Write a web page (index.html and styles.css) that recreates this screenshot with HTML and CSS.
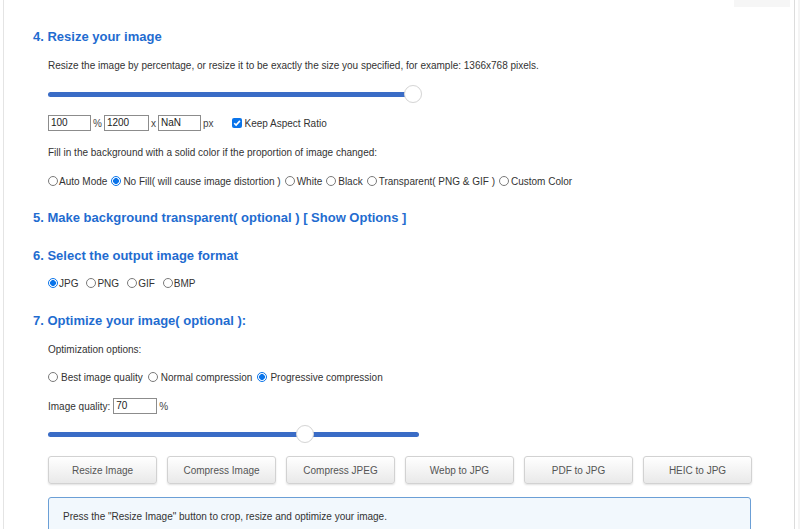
FILE: index.html
```html
<!DOCTYPE html>
<html>
<head>
<meta charset="utf-8">
<link rel="stylesheet" href="styles.css">
</head>
<body>
<div class="page">
  <div class="topbar"><span class="topbtn"></span></div>

  <h2 class="step s4">4. Resize your image</h2>
  <div class="inner">
    <p class="txt t1">Resize the image by percentage, or resize it to be exactly the size you specified, for example: 1366x768 pixels.</p>
    <div class="slider sl1"><div class="track"></div><span class="thumb" style="left:356px"></span></div>
    <div class="sizes">
      <span class="field w42">100</span><span class="unit">%</span>
      <span class="field w44">1200</span><span class="unit">x</span>
      <span class="field w42">NaN</span><span class="unit">px</span>
      <span class="check"><svg viewBox="0 0 10 10" width="10" height="10"><rect width="10" height="10" rx="2" fill="#0a74ea"/><path d="M2.2 5.2 L4.1 7.1 L7.9 2.9" fill="none" stroke="#fff" stroke-width="1.6"/></svg></span><span class="cklabel">Keep Aspect Ratio</span>
    </div>
    <p class="txt t2">Fill in the background with a solid color if the proportion of image changed:</p>
    <div class="radios r1">
      <label class="opt tight"><span class="radio"></span>Auto Mode</label>
      <label class="opt"><span class="radio on"></span>No Fill( will cause image distortion )</label>
      <label class="opt"><span class="radio"></span>White</label>
      <label class="opt"><span class="radio"></span>Black</label>
      <label class="opt"><span class="radio"></span>Transparent( PNG &amp; GIF )</label>
      <label class="opt"><span class="radio"></span>Custom Color</label>
    </div>
  </div>

  <h2 class="step s5">5. Make background transparent( optional ) [ Show Options ]</h2>

  <h2 class="step s6">6. Select the output image format</h2>
  <div class="inner">
    <div class="radios r2">
      <label class="opt tight"><span class="radio on"></span>JPG</label>
      <label class="opt tight"><span class="radio"></span>PNG</label>
      <label class="opt tight"><span class="radio"></span>GIF</label>
      <label class="opt tight"><span class="radio"></span>BMP</label>
    </div>
  </div>

  <h2 class="step s7">7. Optimize your image( optional ):</h2>
  <div class="inner">
    <p class="txt t3">Optimization options:</p>
    <div class="radios r3">
      <label class="opt"><span class="radio"></span>Best image quality</label>
      <label class="opt"><span class="radio"></span>Normal compression</label>
      <label class="opt"><span class="radio on"></span>Progressive compression</label>
    </div>
    <div class="quality"><span class="qlabel">Image quality:</span><span class="field w43">70</span><span class="unit">%</span></div>
    <div class="slider sl2"><div class="track"></div><span class="thumb" style="left:248px"></span></div>

    <div class="buttons">
      <span class="btn">Resize Image</span>
      <span class="btn">Compress Image</span>
      <span class="btn">Compress JPEG</span>
      <span class="btn">Webp to JPG</span>
      <span class="btn">PDF to JPG</span>
      <span class="btn">HEIC to JPG</span>
    </div>

    <div class="info">Press the "Resize Image" button to crop, resize and optimize your image.</div>
  </div>
</div>
</body>
</html>
```

FILE: styles.css
```css
html, body {
  margin: 0;
  padding: 0;
  background: #f4f4f4;
  height: 100%;
  overflow: hidden;
}
body {
  font-family: "Liberation Sans", Arial, sans-serif;
  color: #333;
  font-size: 10px;
}
.page {
  margin-left: 3px;
  width: 790px;
  min-height: 100%;
  background: #fff;
  border-left: 1px solid #e4e4e4;
  border-right: 1px solid #dcdcdc;
  display: flex;
  flex-direction: column;
  box-shadow: 0 0 0 3px #fff;
}
.topbar {
  height: 7px;
  display: flex;
  justify-content: flex-end;
  padding-right: 4px;
}
.topbtn {
  width: 56px;
  height: 7px;
  background: #f6f6f6;
}
.step {
  margin: 0;
  padding-left: 29px;
  font-size: 13px;
  line-height: 18px;
  height: 18px;
  font-weight: bold;
  color: #1f6cd0;
}
.s4 { margin-top: 21px; }
.s5 { margin-top: 21px; }
.s6 { margin-top: 20px; }
.s7 { margin-top: 22px; }
.inner {
  padding-left: 44px;
  display: flex;
  flex-direction: column;
}
.txt {
  margin: 0;
  line-height: 14px;
  height: 14px;
}
.t1 { margin-top: 13px; }
.t2 { margin-top: 14px; }
.t3 { margin-top: 13px; }

.slider {
  position: relative;
  width: 374px;
  height: 20px;
  display: flex;
  align-items: center;
}
.sl1 { margin-top: 11px; }
.sl2 { margin-top: 9px; width: 371px; }
.track {
  width: 100%;
  height: 5px;
  border-radius: 3px;
  background: #3a6cc6;
}
.sl1 .track { width: 360px; }
.thumb {
  position: absolute;
  top: 1px;
  width: 16px;
  height: 16px;
  border-radius: 50%;
  background: #fff;
  border: 1px solid #d6d6d6;
  box-shadow: 0 0 1px rgba(0,0,0,0.05);
}

.sizes {
  margin-top: 10px;
  height: 18px;
  display: flex;
  align-items: center;
}
.field {
  box-sizing: border-box;
  height: 16px;
  border: 1px solid #8c8c8c;
  padding: 0 2px;
  line-height: 14px;
  font-size: 10px;
  color: #222;
  background: #fff;
}
.w42 { width: 43px; }
.w44 { width: 45px; }
.w43 { width: 44px; }
.unit {
  margin: 0 2px 0 2px;
  color: #444;
}
.check {
  margin-left: 17px;
  width: 10px;
  height: 10px;
  display: flex;
}
.cklabel { margin-left: 2px; }

.radios {
  margin-top: 14px;
  height: 14px;
  display: flex;
  align-items: center;
  gap: 4px;
}
.r2 { margin-top: 11px; gap: 8px; }
.r3 { margin-top: 13px; gap: 5px; }
.opt {
  display: flex;
  align-items: center;
  gap: 2px;
  white-space: nowrap;
}
.opt.tight { gap: 1px; }
.r3 .opt { gap: 3px; }
.radio {
  box-sizing: border-box;
  width: 10px;
  height: 10px;
  border-radius: 50%;
  border: 1px solid #7a7a7a;
  background: #fff;
}
.radio.on {
  border-color: #0a74ea;
  background: radial-gradient(circle, #0a74ea 0 2.6px, #fff 3.2px);
}

.quality {
  margin-top: 13px;
  height: 18px;
  display: flex;
  align-items: center;
}
.qlabel { margin-right: 3px; }

.buttons {
  margin-top: 12px;
  display: flex;
  gap: 10px;
}
.btn {
  box-sizing: border-box;
  width: 109px;
  height: 28px;
  border: 1px solid #d2d2d2;
  border-radius: 3px;
  background: linear-gradient(#ffffff, #e9e9e9);
  box-shadow: 0 1px 2px rgba(0,0,0,0.12);
  color: #555;
  display: flex;
  align-items: center;
  justify-content: center;
  font-size: 10px;
}

.info {
  margin-top: 13px;
  width: 703px;
  box-sizing: border-box;
  height: 60px;
  border: 1px solid #6b9fd6;
  border-radius: 3px;
  background: #f2f8fd;
  padding: 12px 14px;
  line-height: 14px;
  color: #333;
}
```
